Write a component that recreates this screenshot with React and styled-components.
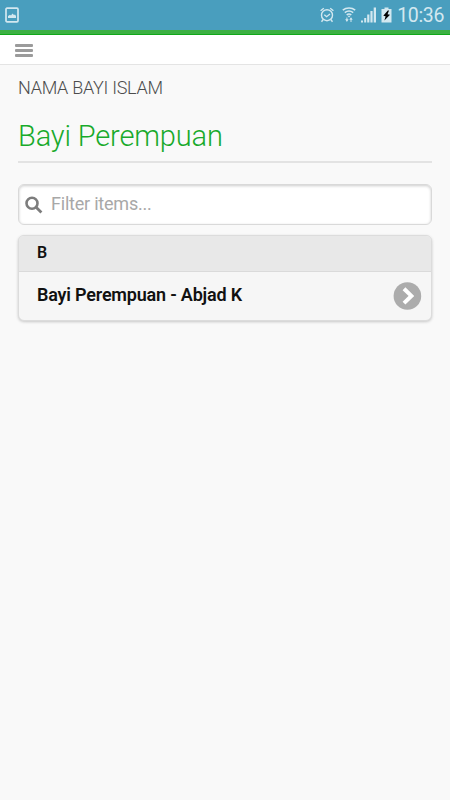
import React from "react";
import styled, { createGlobalStyle } from "styled-components";

const GlobalStyle = createGlobalStyle`
  * {
    box-sizing: border-box;
  }
  body {
    margin: 0;
    background-color: #f9f9f9;
    font-family: Roboto, "Liberation Sans", sans-serif;
  }
`;

const Screen = styled.div`
  min-height: 800px;
  background-color: #f9f9f9;
`;

const StatusBar = styled.div`
  display: flex;
  justify-content: space-between;
  align-items: center;
  height: 30px;
  padding: 0 6px 0 5px;
  background-color: #499ebe;
  color: #d3e8f0;
  svg {
    display: block;
  }
  .icons {
    display: flex;
    align-items: center;
  }
  .time {
    height: 30px;
    margin-left: 5px;
    font-size: 19.5px;
    line-height: 32px;
    letter-spacing: -0.35px;
  }
`;

const GreenLine = styled.div`
  height: 5px;
  background-color: #3cb043;
  border-bottom: 1px solid #10a818;
`;

const Toolbar = styled.header`
  display: flex;
  height: 30px;
  padding: 9px 15px 0;
  background-color: #fff;
  border-bottom: 1px solid #e4e4e4;
`;

const MenuButton = styled.button`
  display: flex;
  flex-direction: column;
  gap: 2px;
  padding: 0;
  border: none;
  background: none;
  span {
    width: 18px;
    height: 3px;
    border-radius: 1px;
    background-color: #9b9b9b;
  }
`;

const Content = styled.main`
  padding: 11px 18px;
`;

const SiteName = styled.div`
  font-size: 18px;
  font-weight: 300;
  line-height: 24px;
  letter-spacing: -0.28px;
  color: #4c4c4c;
`;

const Title = styled.h1`
  height: 63px;
  margin: 0;
  padding-top: 17px;
  border-bottom: 2px solid #e3e3e3;
  font-size: 29px;
  font-weight: 300;
  line-height: 38px;
  letter-spacing: -0.15px;
  color: #18aa2b;
`;

const SearchBox = styled.label`
  display: flex;
  align-items: center;
  height: 41px;
  margin-top: 21px;
  padding: 0 6px;
  background-color: #fff;
  border: 1px solid #d9d9d9;
  border-radius: 6px;
  box-shadow: inset 0 1px 3px rgba(0, 0, 0, 0.2);
  input {
    flex: 1;
    min-width: 0;
    margin-left: 8px;
    padding: 0 0 2px;
    border: none;
    outline: none;
    background: none;
    font-family: inherit;
    font-size: 18px;
    letter-spacing: -0.22px;
    &::placeholder {
      color: #a8a8a8;
      opacity: 1;
    }
  }
`;

const List = styled.ul`
  margin: 10px 0 0;
  padding: 0;
  list-style: none;
  background-color: #f6f6f6;
  border: 1px solid #dcdcdc;
  border-radius: 6px;
  box-shadow: 0 1px 3px rgba(0, 0, 0, 0.2);
  overflow: hidden;
  color: #111;
  font-weight: 600;
`;

const Divider = styled.li`
  height: 36px;
  padding-left: 18px;
  background-color: #e8e8e8;
  border-bottom: 1px solid #dadada;
  font-size: 16px;
  line-height: 33px;
`;

const Row = styled.li`
  display: flex;
  justify-content: space-between;
  align-items: center;
  height: 48px;
  padding: 0 9px 0 18px;
  font-size: 18px;
  letter-spacing: -0.2px;
  svg {
    display: block;
  }
  .name {
    padding-bottom: 3px;
  }
`;

const Gap = styled.span`
  width: ${(props) => props.$size}px;
`;

const PictureIcon = () => (
  <svg width="14" height="16" viewBox="0 0 14 16">
    <rect x="1" y="1.2" width="12" height="13.6" rx="1" fill="none" stroke="currentColor" strokeWidth="1.7" />
    <path d="M3 11V9l2-1.2 1 .8 1.5-2L9 8l1-.6L11 9v2z" fill="currentColor" />
  </svg>
);

const AlarmIcon = () => (
  <svg width="14" height="16" viewBox="0 0 14 16" fill="none" stroke="currentColor" strokeWidth="1.4">
    <circle cx="7" cy="8.2" r="5.5" />
    <path d="M.6 3.8L3.8 1.2M13.4 3.8l-3.2-2.6M3.2 12.5l-1.7 2.2M10.8 12.5l1.7 2.2M4.3 7.7l2.3 2L10 7" />
  </svg>
);

const WifiIcon = () => (
  <svg width="14" height="16" viewBox="0 0 14 16" fill="none" stroke="currentColor" strokeWidth="1.6">
    <path d="M.8 3.2c3.6-3 8.8-3 12.4 0M2.8 5.7c2.5-2 5.9-2 8.4 0M4.7 8c1.4-1.2 3.2-1.2 4.6 0" />
    <path d="M5.5 8.8h3L7 10.6z" fill="currentColor" stroke="none" />
    <path d="M4.9 10.5v3M9 11.5v3.5" strokeWidth="1" />
    <path d="M3.2 12.3h3.4l-1.7 2.7zM7.3 12.7h3.4L9 10.3z" fill="currentColor" stroke="none" />
  </svg>
);

const SignalIcon = () => (
  <svg width="15" height="16" viewBox="0 0 15 16" fill="currentColor">
    <path d="M0 13.5h2V15.5H0zM3.2 11h2v4.5h-2zM6.2 7.5h2.2v8H6.2zM9.4 4h2.2v11.5H9.4zM12.7.5H15v15h-2.3z" />
  </svg>
);

const BatteryIcon = () => (
  <svg width="11" height="16" viewBox="0 0 11 16">
    <path d="M.5 2H3.5V.5h4V2h3v13.5H.5z" fill="currentColor" />
    <path d="M6.8 3.5L2.3 8.8l2.3.4-1.2 4.3L9 7.8l-2.5-.5L8 3.5z" fill="#000" />
  </svg>
);

const SearchIcon = () => (
  <svg width="18" height="18" viewBox="0 0 18 18" fill="none" stroke="#7d7d7d" strokeWidth="2.6">
    <circle cx="7" cy="7.2" r="5.5" />
    <path d="M10.9 11.1l5.5 5.5" strokeWidth="2.8" />
  </svg>
);

const ArrowIcon = () => (
  <svg width="29" height="28" viewBox="0 0 29 28">
    <circle cx="14.4" cy="14" r="13.8" fill="#acacac" />
    <path d="M11 6.7l7.4 7.2-7.4 7.2" fill="none" stroke="#fff" strokeWidth="4" />
  </svg>
);

const items = [{ id: 1, name: "Bayi Perempuan - Abjad K" }];

const App = () => {
  return (
    <Screen>
      <GlobalStyle />
      <StatusBar>
        <PictureIcon />
        <div className="icons">
          <AlarmIcon />
          <Gap $size={8} />
          <WifiIcon />
          <Gap $size={5} />
          <SignalIcon />
          <Gap $size={5} />
          <BatteryIcon />
          <span className="time">10:36</span>
        </div>
      </StatusBar>
      <GreenLine />
      <Toolbar>
        <MenuButton aria-label="Menu">
          <span />
          <span />
          <span />
        </MenuButton>
      </Toolbar>
      <Content>
        <SiteName>NAMA BAYI ISLAM</SiteName>
        <Title>Bayi Perempuan</Title>
        <SearchBox>
          <SearchIcon />
          <input type="text" placeholder="Filter items..." />
        </SearchBox>
        <List>
          <Divider>B</Divider>
          {items.map((item) => (
            <Row key={item.id}>
              <span className="name">{item.name}</span>
              <ArrowIcon />
            </Row>
          ))}
        </List>
      </Content>
    </Screen>
  );
};

export default App;
